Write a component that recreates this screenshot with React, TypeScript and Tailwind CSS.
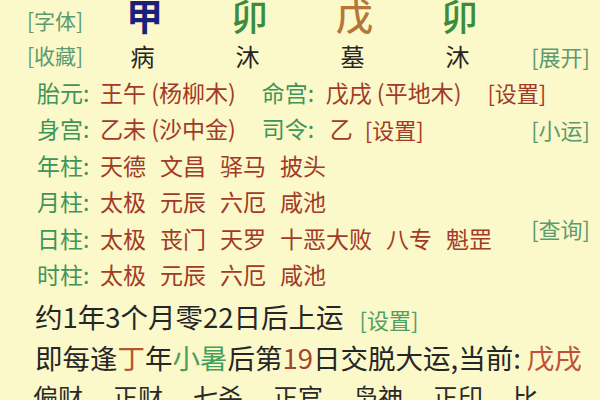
import React from 'react';

const label = 'text-[#3f9559]';
const val = 'text-[#a23a28]';
const side = 'text-[22px] text-[#5e9a70]';

function Words({ words }: { words: string[] }) {
  return (
    <div className={`flex gap-[14px] ${val}`}>
      {words.map((w, i) => (
        <span key={i}>{w}</span>
      ))}
    </div>
  );
}

function ShenshaRow({ name, words, right }: { name: string; words: string[]; right?: React.ReactNode }) {
  return (
    <div className="flex h-[36.5px] items-center pl-[37px] pr-[10px] text-[23px]">
      <span className={`w-[63px] ${label}`}>{name}:</span>
      <Words words={words} />
      {right}
    </div>
  );
}

export default function App() {
  const top = [
    { c: '甲', cls: 'text-[#1b1f7e] font-bold' },
    { c: '卯', cls: 'text-[#3a8e3b] font-medium' },
    { c: '戊', cls: 'text-[#b5763a] font-medium' },
    { c: '卯', cls: 'text-[#3a8e3b] font-medium' },
  ];
  const sub = ['病', '沐', '墓', '沐'];
  const gods = ['偏财', '正财', '七杀', '正官', '枭神', '正印', '比'];

  return (
    <div className="h-[400px] w-[600px] overflow-hidden bg-[#fbf8c9] font-['Noto_Sans_CJK_SC',sans-serif] leading-none">
      {/* pillars */}
      <div className="-mt-[7px] flex h-[44px] items-center pl-[27px]">
        <span className="mt-[10px] w-[65px] text-[21px] text-[#5e9a70]">[字体]</span>
        {top.map((t, i) => (
          <span key={i} className={`w-[105px] text-center text-[37px] ${t.cls}`}>
            {t.c}
          </span>
        ))}
      </div>
      <div className="flex h-[37px] items-center pl-[27px] pr-[10px]">
        <span className="w-[63px] text-[21px] text-[#5e9a70]">[收藏]</span>
        {sub.map((s, i) => (
          <span key={i} className="w-[105px] text-center text-[24px] text-[#252525]">
            {s}
          </span>
        ))}
        <span className={`ml-auto ${side}`}>[展开]</span>
      </div>

      {/* 胎元 / 命宫 */}
      <div className="flex h-[36.5px] items-center pl-[37px] text-[23px]">
        <span className={`w-[63px] ${label}`}>胎元:</span>
        <span className={val}>王午 (杨柳木)</span>
        <span className={`ml-[26px] w-[64px] ${label}`}>命宫:</span>
        <span className={val}>戊戌 (平地木)</span>
        <span className={`ml-[26px] text-[22px] ${val}`}>[设置]</span>
      </div>
      {/* 身宫 / 司令 */}
      <div className="flex h-[36.5px] items-center pl-[37px] pr-[10px] text-[23px]">
        <span className={`w-[63px] ${label}`}>身宫:</span>
        <span className={val}>乙未 (沙中金)</span>
        <span className={`ml-[26px] w-[68px] ${label}`}>司令:</span>
        <span className={val}>乙</span>
        <span className={`ml-[12px] text-[22px] ${val}`}>[设置]</span>
        <span className={`ml-auto ${side}`}>[小运]</span>
      </div>

      <ShenshaRow name="年柱" words={['天德', '文昌', '驿马', '披头']} />
      <ShenshaRow name="月柱" words={['太极', '元辰', '六厄', '咸池']} />
      <ShenshaRow
        name="日柱"
        words={['太极', '丧门', '天罗', '十恶大败', '八专', '魁罡']}
        right={<span className={`ml-auto mb-[20px] ${side}`}>[查询]</span>}
      />
      <ShenshaRow name="时柱" words={['太极', '元辰', '六厄', '咸池']} />

      {/* 起运 */}
      <div className="flex h-[48px] items-center pl-[35px] text-[27.5px] text-[#262626]">
        <span>约1年3个月零22日后上运</span>
        <span className="ml-[16px] mt-[4px] text-[22px] text-[#4fa066]">[设置]</span>
      </div>
      <div className="flex h-[34px] items-center pl-[35px] text-[27.5px] text-[#262626]">
        <span>即每逢</span>
        <span className="text-[#b4582f]">丁</span>
        <span>年</span>
        <span className="text-[#44a05c]">小暑</span>
        <span>后第</span>
        <span className="text-[#a8442a]">19</span>
        <span>日交脱大运,当前: </span>
        <span className="ml-[6px] text-[#c0503a]">戊戌</span>
      </div>

      {/* 十神 */}
      <div className="flex h-[42px] items-center pl-[33px] text-[25px] text-[#2a2a2a]">
        {gods.map((g, i) => (
          <span key={i} className="w-[80px] shrink-0">
            {g}
          </span>
        ))}
      </div>
    </div>
  );
}
